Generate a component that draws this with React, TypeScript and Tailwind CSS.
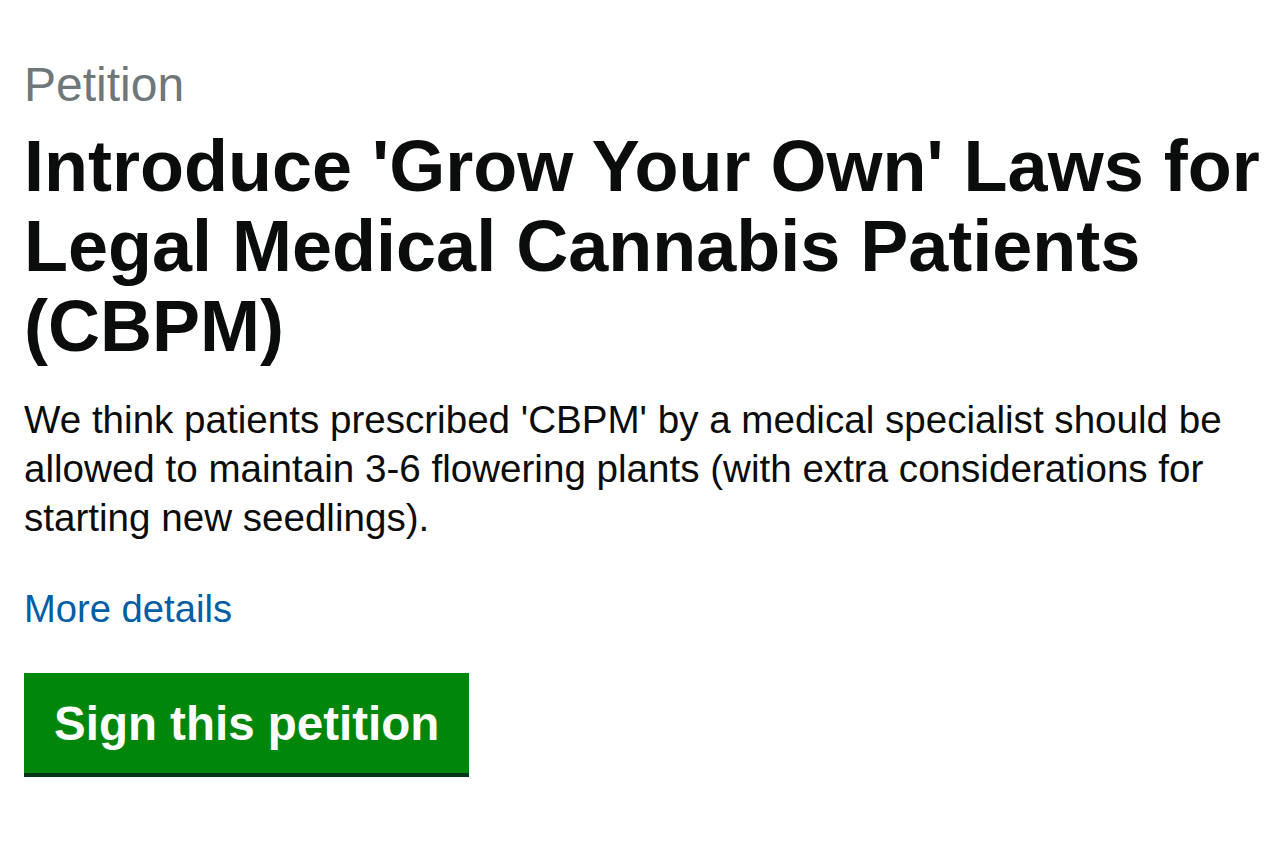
export default function App() {
  return (
    <div className="min-h-screen bg-white px-[24px] pt-[59px] font-['Liberation_Sans',Arial,sans-serif] text-[#0b0c0c]">
      <p className="text-[48px] leading-[52px] text-[#6f777b]">Petition</p>
      <h1 className="mr-[-20px] mt-[15px] text-[72px] font-bold leading-[80px]">
        Introduce 'Grow Your Own' Laws for Legal Medical Cannabis Patients (CBPM)
      </h1>
      <p className="mt-[29px] text-[38.6px] leading-[49px]">
        We think patients prescribed 'CBPM' by a medical specialist should be allowed to maintain 3-6 flowering plants
        (with extra considerations for starting new seedlings).
      </p>
      <a href="#" className="mt-[42px] block text-[38.2px] leading-[49px] text-[#005ea5]">
        More details
      </a>
      <button className="mt-[40px] bg-[#00870b] px-[30px] pb-[23px] pt-[24px] text-[47.5px] font-bold leading-[53px] text-white shadow-[0_4px_0_#003618]">
        Sign this petition
      </button>
    </div>
  );
}
